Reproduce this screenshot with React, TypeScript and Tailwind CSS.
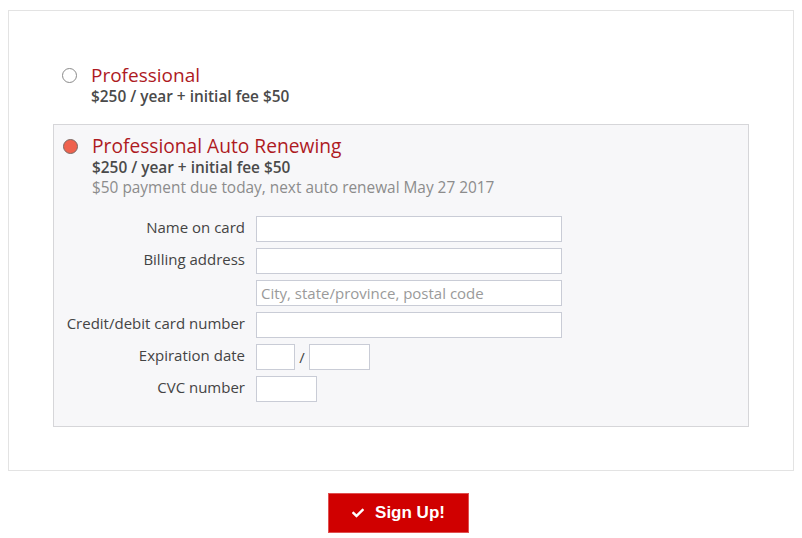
import { FaCheck } from "react-icons/fa";

function Field({ label, children }: { label?: string; children: React.ReactNode }) {
  return (
    <>
      <div className="-mt-[2px] text-right text-[15px] leading-[26px] text-[#444]">{label}</div>
      <div className="flex items-center">{children}</div>
    </>
  );
}

const inputCls =
  "h-[26px] border border-[#c9ccd6] bg-white px-[4px] text-[15px] text-[#444] outline-none placeholder:text-[#9a9a9a]";

export default function App() {
  return (
    <div className="min-h-[538px] bg-white px-[8px] pt-[10px]" style={{ fontFamily: '"Open Sans", "Liberation Sans", sans-serif' }}>
      <div className="h-[461px] border border-[#e3e3e3] px-[44px] pt-[52px]">
        {/* plan 1 */}
        <div className="flex pl-[9px]">
          <div className="flex h-[24px] w-[29px] items-center">
            <span className="block h-[15px] w-[15px] rounded-full border border-[#8a8a8a] bg-white" />
          </div>
          <div>
            <div className="text-[19px] leading-[24px] text-[#ae1a1f]">Professional</div>
            <div className="text-[15.4px] font-semibold leading-[20px] text-[#4a4a4a]">$250 / year + initial fee $50</div>
          </div>
        </div>

        {/* plan 2 */}
        <div className="mt-[17px] border border-[#d6d6d9] bg-[#f7f7f9] pb-[24px] pt-[9px]">
          <div className="flex pl-[9px]">
            <div className="flex h-[24px] w-[29px] items-center">
              <span className="block h-[15px] w-[15px] rounded-full border border-[#7a6a66] bg-[#ef624e]" />
            </div>
            <div>
              <div className="text-[19.2px] leading-[24px] text-[#ae1a1f]">Professional Auto Renewing</div>
              <div className="text-[15.4px] font-semibold leading-[20px] text-[#4a4a4a]">$250 / year + initial fee $50</div>
              <div className="text-[15.4px] leading-[20px] text-[#8c8c8c]">$50 payment due today, next auto renewal May 27 2017</div>
            </div>
          </div>

          <div className="mt-[18px] grid grid-cols-[191px_306px] gap-x-[11px] gap-y-[6px]">
            <Field label="Name on card">
              <input className={inputCls + " w-[306px]"} />
            </Field>
            <Field label="Billing address">
              <input className={inputCls + " w-[306px]"} />
            </Field>
            <Field>
              <input className={inputCls + " w-[306px]"} placeholder="City, state/province, postal code" />
            </Field>
            <Field label="Credit/debit card number">
              <input className={inputCls + " w-[306px]"} />
            </Field>
            <Field label="Expiration date">
              <input className={inputCls + " w-[39px]"} />
              <span className="w-[14px] text-center text-[15px] text-[#444]">/</span>
              <input className={inputCls + " w-[61px]"} />
            </Field>
            <Field label="CVC number">
              <input className={inputCls + " w-[61px]"} />
            </Field>
          </div>
        </div>
      </div>

      <div className="mt-[22px] flex justify-center pr-[5px]">
        <button
          className="flex h-[40px] w-[141px] items-center justify-center gap-[11px] border border-[#e05050] bg-[#d00000] text-[17px] font-bold text-white"
          style={{ fontFamily: '"Liberation Sans", Arial, sans-serif' }}
        >
          <FaCheck className="text-[12px]" />
          Sign Up!
        </button>
      </div>
    </div>
  );
}
